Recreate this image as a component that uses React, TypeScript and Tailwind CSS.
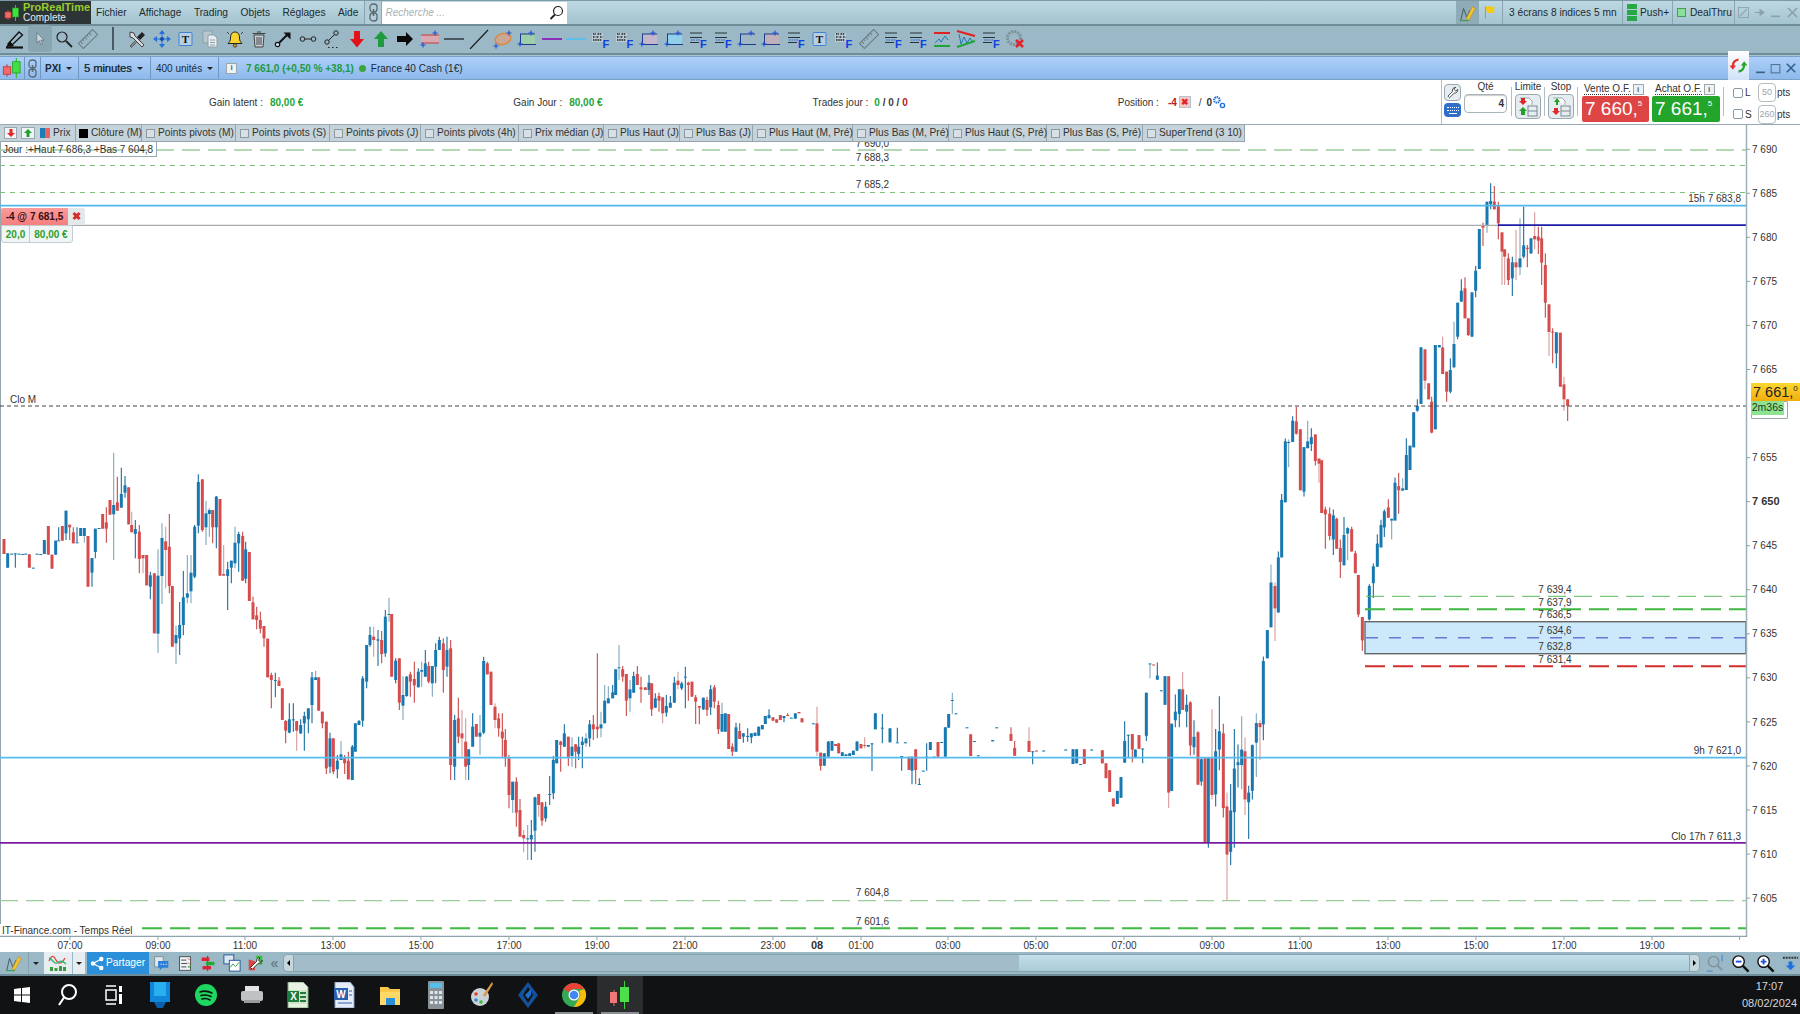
import React from "react";

type C = number[];
// candle tables: [x, red?, bodyTop, bodyBottom, wickTop?, wickBottom?, lightWick?] in crop units
const Z8: C[] = [[12,1,327,372],[23,0,370,413],[35,0,371,372],[46,0,370,372,370,413],[57,0,371,372],[68,0,372,373],[77,0,371,372],[88,1,373,413],[100,0,413,414],[111,0,371,372],[122,0,372,373],[133,0,330,372],[145,1,288,374],[156,1,374,416],[167,0,332,374],[176,0,331,332,292,332],[187,1,288,332],[198,0,242,310,242,330],[209,1,284,292,284,330],[220,1,307,340,292,340],[231,0,337,338,292,338],[242,0,294,318],[253,0,294,318,294,338,1],[264,1,318,470],[276,0,384,428,384,470],[286,0,296,366,296,385],[297,0,294,295],[308,1,252,296],[319,1,277,296,232,338],[330,1,210,254],[341,0,225,253,68,390,1],[352,1,217,242,140,242],[364,0,192,233,113,233],[375,0,166,188,138,203],[386,1,172,283],[395,1,285,307,245,307,1],[406,0,297,312,270,385],[418,1,305,387,285,430],[429,1,375,385,375,430,1],[440,1,375,466],[451,0,436,470,425,508],[463,1,430,610],[474,0,437,611,358,668,1],[486,0,324,438,280,522,1],[497,1,334,360,290,475,1],[508,1,350,468,252,490],[517,1,468,650],[528,0,615,640,587,703,1],[539,0,585,625,516,675],[550,0,502,585,423,616],[562,0,490,503,375,520,1],[573,0,428,484,375,520,1],[584,0,290,440,285,445],[595,0,156,287,133,310],[607,1,148,300,148,305],[618,0,250,292,212,345,1],[628,0,240,252,235,320,1],[638,1,240,292,240,340],[649,0,200,292,198,355],[660,1,207,437],[671,1,432,437,345,437,1],[683,0,418,438,395,540],[694,0,392,413,392,460],[705,0,338,400,290,415,1],[716,0,312,340,305,425],[728,1,318,452,305,452],[737,0,358,446,335,460],[748,1,366,513],[759,1,517,568,500,568],[770,1,556,570,530,598],[781,1,570,596,545,610],[792,1,588,625,588,650],[803,1,626,742],[814,1,735,750,728,835],[826,0,750,751,728,802],[837,1,752,768,742,768],[847,1,775,870,775,835],[857,1,873,902,870,940],[868,0,868,908,820,910],[880,0,868,870,820,905],[890,1,873,902,873,962,1],[902,0,885,910,868,912],[913,0,858,880,845,962],[925,0,835,868,835,910],[936,0,742,825,726,880],[947,0,742,750,722,750,1],[956,1,742,842],[967,1,845,880,845,895],[979,1,875,1015,875,1032],[990,0,925,1010,908,1030],[1000,1,925,1025,925,1032],[1012,0,992,1018,975,1045],[1023,0,973,990,933,990,1],[1034,1,985,1000,975,1032],[1045,1,992,1048,965,1048],[1057,0,950,1050,945,1050],[1066,0,880,965],[1077,0,873,885,870,885],[1088,0,745,872,738,890],[1100,0,645,755,645,775],[1110,0,615,645,590,650],[1121,1,620,630,590,680,1],[1134,0,628,632,600,708],[1145,1,630,672,603,700],[1156,0,560,670,540,680],[1167,0,552,554,503,575,1],[1175,1,552,740],[1187,0,692,750,685,760],[1198,1,685,818,685,840],[1209,0,795,827,738,870,1],[1220,0,740,798,738,800],[1231,1,733,755,725,800],[1243,1,747,766,695,818],[1255,0,725,772,715,772],[1265,0,720,725,695,770,1],[1276,0,700,740,660,740],[1286,1,708,755,695,760],[1297,0,708,760,708,800,1],[1307,0,660,710,640,760],[1318,0,630,660,620,660],[1330,1,640,720,625,788],[1341,0,660,710,620,740],[1352,1,655,1005,630,1050],[1364,0,870,1010,855,1050],[1375,1,865,920,803,940],[1386,1,910,925,840,980,1],[1397,1,935,1010,865,1050,1],[1406,0,958,1005,958,1050],[1418,0,890,950,850,950],[1429,1,882,920,882,920,1],[1440,0,908,920,855,975,1],[1451,0,693,908,680,912],[1462,1,700,733,695,733],[1473,1,725,825],[1485,1,830,870,820,895,1],[1496,1,865,895,850,920]];
const Z9: C[] = [[7,1,305,325,250,380],[16,1,330,385,297,410],[27,1,385,495,375,535],[38,0,455,510,455,548,1],[49,1,455,548,442,590],[60,1,540,620,507,620],[71,1,615,625,600,667,1],[83,0,625,626,585,690,1],[94,0,615,628,570,690],[105,0,502,602,500,665],[116,1,492,525,492,560,1],[126,1,517,572,517,587],[137,0,530,565,515,575],[149,0,492,493,438,525],[160,0,390,490,378,508],[170,0,330,400],[182,1,335,345,332,425],[193,0,310,350,283,350],[205,1,320,382,320,408],[216,0,350,378,322,410,1],[227,1,343,365,343,415],[236,0,350,372,320,390],[247,0,335,345,320,415],[258,0,325,340,310,350,1],[269,0,283,325,270,350],[280,1,283,298,255,330],[292,1,290,298,70,325],[303,0,283,295,245,322,1],[314,0,212,280,165,280,1],[325,0,205,220,168,220,1],[338,0,187,205,165,205],[347,0,118,195],[357,0,112,113,45,150,1],[368,1,118,140,108,155],[379,1,132,212,132,258],[390,0,178,205,150,245,1],[401,0,138,188,125,188],[412,1,132,165,108,165],[423,1,172,178,140,218],[436,1,172,180],[447,0,158,180,135,195],[455,1,160,238,160,258],[466,0,205,233,190,233],[477,1,198,212,188,245],[488,1,202,250,202,280,1],[499,0,228,248,195,260],[511,0,218,233,198,233],[523,0,158,218,140,218],[534,1,152,165,125,178,1],[545,0,160,175,155,180],[556,0,140,141,110,235],[565,1,158,165,155,212],[576,1,155,200],[587,1,202,215,195,282],[598,1,228,233,228,283],[610,0,203,238,203,240],[621,1,210,240,200,258],[632,0,178,232,165,255],[643,1,172,215,165,235],[655,1,225,298,212,312],[666,0,252,305,218,305,1],[676,0,250,305],[686,1,252,357],[697,1,350,365,340,378],[708,0,292,365,278,365],[719,1,303,327,280,327],[730,0,310,320,310,338],[743,0,318,320,295,335],[754,0,310,322,310,340],[765,0,308,318],[776,0,290,317],[787,0,285,298],[796,0,258,282],[807,0,255,265,238,265],[819,1,262,272],[830,1,268,278],[841,1,255,270],[852,0,258,264,258,277],[863,1,255,258,250,258],[874,0,263,264],[886,0,250,266],[897,1,246,250],[906,1,265,277],[940,0,280,281],[951,1,280,365,230,378,1],[962,1,368,408,368,422],[973,0,370,407],[985,0,335,380,333,380],[996,0,333,362],[1007,1,342,348],[1016,1,340,370],[1027,0,367,378],[1038,0,373,378],[1049,0,370,378],[1060,0,362,375],[1071,0,335,362,333,362],[1083,1,342,355],[1094,1,345,348,322,355,1],[1105,0,345,350],[1116,0,340,341,340,423],[1126,0,250,298],[1147,0,293,294,252,340],[1170,0,295,337],[1192,0,337,338,293,337],[1205,0,378,379,378,422],[1216,0,337,338],[1227,1,380,420],[1236,0,380,422,380,463],[1247,1,358,420,358,463],[1258,0,462,463,445,463],[1270,0,422,423],[1280,0,380,381,340,422],[1291,0,336,360],[1303,0,380,381],[1314,1,336,380],[1325,0,336,337],[1336,0,292,380],[1346,0,252,293],[1357,0,210,211,188,252,1],[1368,0,250,251],[1401,0,292,293],[1412,1,313,378],[1423,0,333,334],[1435,0,376,377],[1478,0,330,334],[1490,0,292,293]];
const Z10: C[] = [[33,1,970,990,950,990],[44,1,1010,1033,990,1033],[87,1,990,1022,950,1022,1],[98,0,1020,1021,1020,1058],[109,1,1018,1019],[131,0,1018,1019],[197,0,1015,1016],[219,0,1014,1057],[230,0,1014,1055],[242,0,1057,1058],[253,1,1014,1057],[275,0,1015,1016],[307,1,1017,1055],[318,1,1055,1098],[329,1,1075,1138],[340,1,1157,1180],[352,0,1135,1173],[363,0,1095,1155],[374,0,990,1053,933,1053],[385,0,972,973,972,1040],[397,1,970,1015,970,1052],[406,0,1015,1038,1015,1040],[417,1,973,1013],[428,0,1012,1013,1012,1055],[439,0,850,975,850,990],[450,0,765,766,765,808,1],[461,1,768,769],[472,0,800,812,762,812],[484,0,843,844],[495,0,802,885],[506,1,802,1140,802,1185,1],[515,0,940,1135],[526,0,905,930,855,950],[538,0,840,912,840,950],[548,1,840,900,790,900,1],[560,0,885,905,855,950],[571,1,878,1003,875,1032],[582,0,978,1008,930,1030],[594,1,965,1117,962,1117],[604,0,1043,1108,1040,1120],[615,1,1040,1285],[625,0,1040,1285,1040,1300],[636,1,1040,1147,898,1160,1],[647,0,1020,1145,955,1180],[658,0,962,1015,860,1075],[670,1,968,1185,940,1212],[681,1,1180,1320,1140,1455,1],[692,0,1192,1312,1115,1350],[703,0,1070,1197,955,1300],[714,0,1052,1060,1000,1125],[725,0,1015,1060,918,1130,1],[735,1,1020,1160,980,1205,1],[746,0,1140,1168,1120,1275],[757,0,1002,1135,1000,1160],[769,0,938,995,910,1095,1],[780,1,938,950,930,1045,1],[790,0,758,942,745,988],[802,0,668,750],[813,0,530,660,478,660,1],[825,1,540,605,530,700,1],[835,0,457,617,440,617],[845,0,290,457,273,457],[856,0,120,297,112,297],[866,0,122,125,115,195,1],[878,0,60,122,47,122],[889,1,62,98,20,100],[901,1,85,262],[912,0,137,266,137,280],[923,0,120,140,60,140,1],[934,0,108,128,82,148],[946,1,100,177,100,190],[957,1,170,185,170,240,1],[965,1,175,328],[976,1,318,332,310,432],[989,1,330,395,312,407],[1000,0,335,405,318,450],[1010,1,345,432,342,432],[1021,1,430,470,405,517],[1032,0,392,480,340,480],[1043,0,372,388,368,465,1],[1055,1,375,440,368,440],[1066,1,445,503,438,503],[1075,1,508,623,508,630],[1087,1,630,698,630,728],[1108,0,540,637,535,640],[1120,0,483,532,475,575],[1132,0,417,484,390,484],[1143,0,363,428,348,428],[1153,0,323,370,318,398],[1165,1,312,342,288,342],[1175,0,345,350,345,405,1],[1185,0,240,350,225,350],[1196,1,250,262,212,330]];
const Z6: C[] = [[308,0,1015,1022,985,1022,1],[319,0,915,1020,865,1020],[330,0,887,960],[341,0,787,892],[352,0,768,782,748,785],[363,0,592,762],[375,1,598,692,598,718,1],[386,1,700,748],[395,1,755,848,740,850],[406,0,585,838],[418,0,585,592],[428,1,592,672,560,672,1],[440,1,665,725,665,755],[451,0,660,725,625,730],[462,0,582,652,515,655,1],[473,0,458,560,458,568],[484,0,422,455,388,455],[495,1,415,505,382,505],[505,1,505,555,505,558],[516,0,427,560],[527,0,362,422,348,442],[538,0,237,357],[549,1,228,233,218,288],[561,0,155,225,155,248,1],[572,0,153,163,100,178],[583,1,155,178,108,178],[595,1,168,220,155,268],[606,1,247,305,247,405,1],[614,1,298,320,298,405,1],[625,1,325,390,310,405],[637,0,337,385,320,438],[648,1,337,352,240,390,1],[660,0,325,352,205,375,1],[671,0,286,320,170,325],[682,1,293,297,285,352],[693,0,265,310,265,312],[704,1,258,268,187,298,1],[715,1,260,272,230,312],[725,1,265,338,230,405],[736,1,345,458,310,503],[747,1,463,546,463,618,1],[758,1,545,546,535,640],[769,0,547,610,547,655],[781,1,548,710],[792,1,703,748,680,782,1],[803,1,748,768,748,813]];

// [rows, x origin, y origin, vertical scale of that table]
const SETS: [C[], number, number, number][] = [[Z8,0,430,3],[Z9,500,630,3],[Z10,1000,400,2.9037],[Z6,1300,150,3]];
const yP = (p: number) => 193.3 + (7685 - p) * 8.81;
const PRICES = [7690,7685,7680,7675,7670,7665,7655,7650,7645,7640,7635,7630,7625,7620,7615,7610,7605];
const TIMES: [string, number][] = [["07:00",70],["09:00",158],["11:00",245],["13:00",333],["15:00",421],["17:00",509],["19:00",597],["21:00",685],["23:00",773],["01:00",861],["03:00",948],["05:00",1036],["07:00",1124],["09:00",1212],["11:00",1300],["13:00",1388],["15:00",1476],["17:00",1564],["19:00",1652]];
const CENTER: [string, number][] = [["7 690,0",147],["7 688,3",161],["7 685,2",188],["7 604,8",896],["7 601,6",925]];
const BOXL: [string, number][] = [["7 639,4",592.5],["7 637,9",605.5],["7 636,5",618],["7 634,6",633.5],["7 632,8",649.5],["7 631,4",662.5]];

function Candles() {
  const out: React.ReactNode[] = [];
  SETS.forEach(([rows, ox, oy, k], s) =>
    rows.forEach((r, i) => {
      const [zx, red, bt, bb, wt = bt, wb = bb, light = 0] = r;
      const x = ox + zx / 3;
      const top = oy + bt / k, bot = oy + bb / k;
      const body = red ? "#d64c4c" : "#1878b0";
      const wick = light ? (red ? "#d99a9a" : "#7ea8bd") : red ? "#c84a4a" : "#1a6d9f";
      out.push(<line key={`w${s}-${i}`} x1={x} x2={x} y1={oy + wt / k} y2={oy + wb / k} stroke={wick} strokeWidth={1.1} />);
      out.push(<rect key={`b${s}-${i}`} x={x - 1.5} y={top} width={3} height={Math.max(bot - top, 1)} fill={body} />);
    })
  );
  return <g>{out}</g>;
}

function Chart() {
  const txt = { fontSize: 10, fill: "#333" };
  return (
    <svg width={1800} height={827} viewBox="0 125 1800 827" className="block">
      <line x1={0.5} x2={0.5} y1={125} y2={936} stroke="#94a6ae" />
      <line x1={0} x2={1746} y1={150} y2={150} stroke="#9dcc9d" strokeWidth={1.3} strokeDasharray="18 8" />
      <line x1={0} x2={1746} y1={165.5} y2={165.5} stroke="#7cc07c" strokeDasharray="5 5" />
      <line x1={0} x2={1746} y1={192.5} y2={192.5} stroke="#7cc07c" strokeDasharray="5 5" />
      <line x1={0} x2={1746} y1={900.7} y2={900.7} stroke="#9dcc9d" strokeWidth={1.3} strokeDasharray="18 8" />
      <line x1={142} x2={1746} y1={928.3} y2={928.3} stroke="#3fb83f" strokeWidth={2} strokeDasharray="20 8" />
      <rect x={1365} y={621.7} width={381} height={32} fill="#cce9fb" stroke="#666" strokeWidth={1.4} />
      <Candles />
      <line x1={0} x2={1746} y1={205.7} y2={205.7} stroke="#4fb9ee" strokeWidth={1.8} />
      <line x1={0} x2={1498} y1={225.4} y2={225.4} stroke="#a9a9a9" strokeWidth={1.3} />
      <line x1={1498} x2={1746} y1={225.2} y2={225.2} stroke="#1c1ca8" strokeWidth={1.8} />
      <line x1={0} x2={1746} y1={406} y2={406} stroke="#444" strokeDasharray="4 3" />
      <line x1={0} x2={1746} y1={757.7} y2={757.7} stroke="#55bdf0" strokeWidth={1.8} />
      <line x1={0} x2={1746} y1={842.8} y2={842.8} stroke="#7a1ea1" strokeWidth={1.8} />
      <line x1={1366} x2={1746} y1={596.3} y2={596.3} stroke="#5cb85c" strokeDasharray="18 8" />
      <line x1={1365} x2={1746} y1={609.3} y2={609.3} stroke="#3fb83f" strokeWidth={2} strokeDasharray="20 8" />
      <line x1={1366} x2={1746} y1={637.7} y2={637.7} stroke="#6a76d2" strokeWidth={1.6} strokeDasharray="12 11" />
      <line x1={1365} x2={1746} y1={666.3} y2={666.3} stroke="#d32f2f" strokeWidth={2} strokeDasharray="20 8" />
      {CENTER.map(([t, y]) => <text key={t} x={872.5} y={y} textAnchor="middle" {...txt}>{t}</text>)}
      {BOXL.map(([t, y]) => <text key={t} x={1555} y={y} textAnchor="middle" {...txt}>{t}</text>)}
      <text x={1741} y={201.5} textAnchor="end" {...txt}>15h 7 683,8</text>
      <text x={1741} y={753.5} textAnchor="end" {...txt}>9h 7 621,0</text>
      <text x={1741} y={839.5} textAnchor="end" {...txt}>Clo 17h 7 611,3</text>
      <text x={10} y={403} {...txt}>Clo M</text>
      <rect x={0} y={924} width={140} height={12} fill="#fff" />
      <text x={2} y={934} {...txt}>IT-Finance.com - Temps Réel</text>
      <line x1={1746.5} x2={1746.5} y1={125} y2={937} stroke="#9db0b8" strokeWidth={1.5} />
      <line x1={0} x2={1747} y1={936.3} y2={936.3} stroke="#90a4ae" strokeWidth={1.3} />
      {PRICES.map((p) => {
        const y = yP(p);
        return (
          <g key={p}>
            <line x1={1746} x2={1750} y1={y} y2={y} stroke="#90a4ae" />
            <text x={1752} y={y + 3.6} fontSize={p === 7650 ? 11 : 10} fontWeight={p === 7650 ? 700 : 400} fill="#333">{`7 ${String(p).slice(1)}`}</text>
          </g>
        );
      })}
      {TIMES.map(([t, x], i) => (
        <g key={i}>
          <line x1={x} x2={x} y1={936} y2={940} stroke="#90a4ae" />
          <text x={x} y={949} textAnchor="middle" {...txt}>{t}</text>
        </g>
      ))}
      <line x1={817} x2={817} y1={936} y2={940} stroke="#90a4ae" />
      <text x={817} y={949} textAnchor="middle" fontSize={11} fontWeight={700} fill="#333">08</text>
      <line x1={1739.6} x2={1739.6} y1={936} y2={940} stroke="#90a4ae" />
    </svg>
  );
}

const S = ({ children, w = 20 }: { children: React.ReactNode; w?: number }) => (
  <svg width={w} height={w} viewBox="0 0 20 20" className="block shrink-0">{children}</svg>
);
const Plus = ({ x, y, c = "#1f4fd8" }: { x: number; y: number; c?: string }) => (
  <path d={`M${x - 2.5} ${y}h5M${x} ${y - 2.5}v5`} stroke={c} strokeWidth={1.1} />
);
const LineIc = ({ c }: { c: string }) => <S><path d="M0 10h20" stroke={c} strokeWidth={1.8} /></S>;
const RectIc = ({ f }: { f: string }) => (
  <S>
    <rect x={3} y={5} width={15} height={10} fill={f} />
    <path d="M2 15.5h17M3.5 5v11M3 5h15" stroke="#1c3d8a" strokeWidth={1} />
    <Plus x={14} y={4} /><Plus x={3} y={15} />
  </S>
);
const FibF = () => (
  <S>
    <path d="M2 4h12M2 8.500h12M2 13.500h9" stroke="#26343a" strokeWidth={1.100} />
    <path d="M3 11h9" stroke="#2a5fd8" strokeWidth={1.100} strokeDasharray="1.500 1" />
    <text x={12} y={18.500} fontSize={11} fontWeight={700} fill="#1040e0">F</text>
  </S>
);
const TxtF = () => (
  <S>
    <path d="M1 4h11v9H1z" fill="#b9cbd4" />
    <path d="M2 5h3M6.500 5h4M2 8h2.500M5.500 8h2.500M9 8h2.500M2 11h9" stroke="#222" strokeWidth={1.300} strokeDasharray="1.500 .7" />
    <text x={11.500} y={18.500} fontSize={11} fontWeight={700} fill="#1040e0">F</text>
  </S>
);
const Ruler = () => (
  <S><g transform="rotate(-45 10 10)"><rect x={0} y={6.5} width={20} height={7} fill="none" stroke="#6a7a82" /><path d="M3 6.5v3M6 6.5v2M9 6.5v3M12 6.5v2M15 6.5v3" stroke="#6a7a82" /></g></S>
);
const TBox = () => (
  <S><rect x={3} y={3.5} width={13} height={13} rx={1} fill="#b7cfe0" stroke="#3e82d8" /><text x={9.5} y={14} textAnchor="middle" fontSize={11} fontWeight={700} fontFamily="Liberation Serif" fill="#111">T</text></S>
);

const TOOLS: React.ReactNode[] = [
  <S key="a"><path d="M3 15 14 3l3.5 3L6 17z" fill="none" stroke="#111" strokeWidth={1.3} /><path d="M1 18.5h17" stroke="#111" strokeWidth={2.2} /><path d="M1 18 5 12l4 5z" fill="#111" /></S>,
  <div key="b" className="flex h-[27px] w-[24px] items-center justify-center rounded-sm bg-[#8aa5b2]"><S w={16}><path d="M6 2v13l3-3 2.2 5 2-1-2.2-4.6H15z" fill="#c9d6dc" stroke="#55666f" strokeWidth={.8} /></S></div>,
  <S key="c"><circle cx={8} cy={8} r={5} fill="none" stroke="#222" strokeWidth={1.2} /><path d="M12 12l6 6" stroke="#222" strokeWidth={1.8} /></S>,
  <Ruler key="d" />,
  <div key="e" className="h-[23px] w-[1.5px] bg-[#4a5a62]" />,
  <S key="f"><path d="M3 3l4 1 1 3 9 9-2 2-9-9-3-1z" fill="#d8dde0" stroke="#333" strokeWidth={.9} /><path d="M10 8l5-5 3 3-5 5z" fill="#222" /><path d="M8 12l-5 5 1.5 1.5 5-5" fill="#888" stroke="#333" strokeWidth={.6} /></S>,
  <S key="g"><path d="M10 1 13 5H7zM10 19l-3-4h6zM1 10l4-3v6zM19 10l-4 3V7z" fill="#1f6fe0" /><path d="M5 10h10M10 5v10" stroke="#1f6fe0" /><circle cx={10} cy={10} r={2} fill="#1a4aa8" /></S>,
  <TBox key="h" />,
  <S key="i"><rect x={3} y={2} width={9} height={12} fill="#b8c6cd" stroke="#8fa0a8" /><path d="M8 6h6l3 3v9H8z" fill="#e8eef0" stroke="#8fa0a8" /><path d="M10 11h5M10 13.5h5M10 16h5" stroke="#8fa0a8" /></S>,
  <S key="j"><path d="M10 3c3.5 0 4.5 3 4.5 6s1.2 4 2.5 5.5H3C4.3 13 5.5 12 5.5 9S6.500 3 10 3z" fill="#f6d32d" stroke="#222" strokeWidth={1} /><circle cx={10} cy={16.500} r={1.7} fill="#d0a010" stroke="#222" strokeWidth={.7} /><path d="M2 3l2 2M18 3l-2 2" stroke="#444" strokeWidth={1} /></S>,
  <S key="k"><path d="M5 6h10l-1 12H6z" fill="#c9d0d3" stroke="#444" /><path d="M3.500 4.500h13M8 3h4M8 8v8M10 8v8M12 8v8" stroke="#444" /></S>,
  <S key="l"><path d="M5 15 15 5" stroke="#111" strokeWidth={2} /><path d="M10.500 3.500h7v7z" fill="#111" /><circle cx={4.500} cy={15.500} r={2.200} fill="#d6e2e8" stroke="#111" strokeWidth={1.200} /></S>,
  <S key="m"><circle cx={4.500} cy={10} r={2.300} fill="none" stroke="#222" /><circle cx={15.500} cy={10} r={2.300} fill="none" stroke="#222" /><path d="M7 10h6" stroke="#222" /></S>,
  <S key="n"><circle cx={14} cy={4} r={2.200} fill="none" stroke="#222" /><circle cx={5} cy={13} r={2.200} fill="none" stroke="#222" /><path d="M6.500 11.500l6-6" stroke="#222" /><path d="M6 18.500h1.500M10 18.500h1.500M14 18.500h1.500" stroke="#222" /></S>,
  <S key="o"><path d="M7 2h6v8h4l-7 8.500L3 10h4z" fill="#e3121a" /></S>,
  <S key="p"><path d="M10 2l7 8h-4v8H7v-8H3z" fill="#1f9a3d" /></S>,
  <S key="q"><path d="M2 7h9V3l7 7-7 7v-4H2z" fill="#0a0a0a" /></S>,
  <S key="r"><rect x={1} y={6} width={18} height={8} fill="#d9a8b0" /><path d="M1 6h18M1 14h18" stroke="#c43a3a" /><Plus x={15} y={4} /><Plus x={3} y={16} /></S>,
  <LineIc key="s" c="#3f4f57" />,
  <S key="t"><path d="M1 20 19 1" stroke="#1a1a1a" strokeWidth={1.2} /></S>,
  <S key="u"><ellipse cx={10} cy={10} rx={8} ry={5.500} fill="#c9a792" stroke="#d98a4a" strokeWidth={1.500} transform="rotate(-15 10 10)" /><Plus x={16} y={4} /><Plus x={3} y={17} /></S>,
  <RectIc key="v" f="#9fcfa8" />,
  <LineIc key="w" c="#8a22b8" />,
  <LineIc key="x" c="#58c0ee" />,
  <TxtF key="y" />, <TxtF key="z" />,
  <RectIc key="A" f="#c4b7cc" />, <RectIc key="B" f="#8fd0ec" />,
  <FibF key="C" />, <FibF key="D" />,
  <RectIc key="E" f="#9fb8c4" />, <RectIc key="F" f="#c0b0ba" />,
  <FibF key="G" />, <TBox key="H" />, <TxtF key="I" />, <Ruler key="J" />,
  <FibF key="K" />, <FibF key="L" />,
  <S key="M"><path d="M2 4h16" stroke="#d22" strokeWidth={2} /><path d="M2 17h16" stroke="#1fa33a" strokeWidth={2} /><path d="M3 14l4-4 2 3 4-6 3 4" fill="none" stroke="#1c7cb4" /></S>,
  <S key="N"><path d="M1 2l18 5" stroke="#d22" strokeWidth={2} /><path d="M1 18l18-6" stroke="#1fa33a" strokeWidth={2} /><path d="M3 5l2 10 3-7 3 6 3-5 2 3" fill="none" stroke="#1c7cb4" /></S>,
  <FibF key="O" />,
  <S key="P"><circle cx={9} cy={9} r={6.500} fill="none" stroke="#7f9099" strokeWidth={3} strokeDasharray="2 1" /><path d="M11 11l7 7M18 11l-7 7" stroke="#e2222a" strokeWidth={2.500} /></S>,
];

const Caret = ({ c = "#222" }: { c?: string }) => <span className="h-0 w-0 border-x-[3px] border-t-[3px] border-x-transparent" style={{ borderTopColor: c }} />;
const Chain = () => (
  <svg width={9} height={19} viewBox="0 0 9 19"><rect x={1} y={1} width={7} height={8} rx={3} fill="none" stroke="#596a73" strokeWidth={1.300} /><rect x={1} y={10} width={7} height={8} rx={3} fill="none" stroke="#596a73" strokeWidth={1.300} /><path d="M4.500 6v7" stroke="#596a73" strokeWidth={1.500} /></svg>
);
const CandleLogo = ({ w = 16 }: { w?: number }) => (
  <svg width={w} height={w} viewBox="0 0 16 16"><path d="M11.500 0v16" stroke="#2fc52f" /><rect x={8.500} y={3} width={6} height={9} fill="#3fe03f" stroke="#1f9a1f" strokeWidth={.6} /><path d="M4 5v10" stroke="#e04545" /><rect x={1} y={7} width={6} height={6} fill="#f06a6a" stroke="#c03030" strokeWidth={.6} /></svg>
);
const Info = () => <span className="flex h-[11px] w-[11px] items-center justify-center border border-[#9aa7ad] bg-[#eef2f4] text-[8px] font-bold leading-none text-[#55656d]">i</span>;
const Box = ({ on }: { on?: boolean }) => <span className={`block h-[9px] w-[9px] shrink-0 border ${on ? "border-black bg-black" : "border-[#8b9aa2] bg-[#d8e0e5]"}`} />;

const TABS: [string, number][] = [
  ["Points pivots (M)", 94], ["Points pivots (S)", 94], ["Points pivots (J)", 91], ["Points pivots (4h)", 98], ["Prix médian (J)", 85],
  ["Plus Haut (J)", 76], ["Plus Bas (J)", 73], ["Plus Haut (M, Pré)", 100], ["Plus Bas (M, Pré)", 96], ["Plus Haut (S, Pré)", 98], ["Plus Bas (S, Pré)", 96], ["SuperTrend (3 10)", 102],
];

function TopBar() {
  return (
    <div className="flex h-[24px] items-center border-t border-[#7e9aa6] bg-gradient-to-b from-[#bdd8e2] to-[#a3c4d0] text-[10.200px] text-[#1c2a30]">
      <div className="flex h-full w-[91px] items-center gap-[3px] bg-[#2c3436] pl-[4px]">
        <CandleLogo />
        <div className="leading-[10.500px]">
          <div className="text-[11px] font-bold text-[#98cc2e]">ProRealTime</div>
          <div className="text-[10px] text-[#e8ecec]">Complete</div>
        </div>
      </div>
      <div className="ml-[5px] flex gap-[12.500px]">
        <span>Fichier</span><span>Affichage</span><span>Trading</span><span>Objets</span><span>Réglages</span><span>Aide</span>
      </div>
      <div className="ml-[6px] flex h-[23px] w-[18px] items-center justify-center border-x border-[#8aa5b1] bg-[#b2cdd8]"><Chain /></div>
      <div className="flex h-[22px] w-[185px] items-center justify-between bg-white pl-[3px] pr-[3px] text-[10px] italic text-[#a9b2b6]">
        <span>Recherche ...</span>
        <svg width={15} height={15} viewBox="0 0 15 15"><circle cx={9} cy={6} r={4.500} fill="none" stroke="#222" strokeWidth={1.200} /><path d="M6 9.500 1.500 14" stroke="#222" strokeWidth={1.800} /></svg>
      </div>
      <div className="ml-auto flex h-full items-center text-[10.200px]">
        <div className="flex h-full w-[23px] items-center justify-center bg-[#8fabb7]"><S w={18}><path d="M2 18 5 5l4 10 3-8" fill="none" stroke="#3a5560" /><path d="M8 16 15 3l3 2-7 13z" fill="#f4c430" stroke="#b08a10" strokeWidth={.6} /><path d="M1 18.500h10" stroke="#2a9a3a" /></S></div>
        <div className="flex h-full w-[24px] items-center justify-center border-r border-[#8aa5b1]"><S w={16}><path d="M3 2h11v8H5z" fill="#f7c914" /><path d="M3 2v15" stroke="#b38e10" /></S></div>
        <span className="w-[120px] border-r border-[#8aa5b1] pl-[6px] leading-[24px]">3 écrans 8 indices 5 mn</span>
        <div className="flex h-full w-[50px] items-center gap-[3px] border-r border-[#8aa5b1] pl-[4px]">
          <span className="flex h-[18px] w-[10px] flex-col gap-px"><i className="flex-1 bg-[#28a745]" /><i className="flex-1 bg-[#28a745]" /><i className="flex-1 bg-[#28a745]" /></span>
          <span>Push+</span>
        </div>
        <div className="flex h-full w-[62px] items-center gap-[4px] border-r border-[#8aa5b1] pl-[4px]">
          <span className="h-[9px] w-[9px] border border-[#4d9a5a] bg-[#88e09a]" />
          <span>DealThru</span>
        </div>
        <div className="flex w-[65px] items-center gap-[5px] pl-[3px] text-[#8aa0aa]">
          <S w={11}><rect x={1} y={1} width={18} height={18} fill="none" stroke="#8aa0aa" strokeWidth={1.500} /><path d="M4 16 16 4" stroke="#8aa0aa" strokeWidth={2} /></S>
          <S w={11}><path d="M1 10h10M11 5v10l7-5z" fill="#8aa0aa" stroke="#8aa0aa" strokeWidth={2} /></S>
          <S w={11}><path d="M2 17h16" stroke="#8aa0aa" strokeWidth={3} /></S>
          <S w={13}><path d="M3 3l14 14M17 3 3 17" stroke="#8aa0aa" strokeWidth={2.500} /></S>
        </div>
      </div>
    </div>
  );
}

function Toolbar() {
  return (
    <>
      <div className="flex h-[29px] items-center border-t-2 border-[#6f8d99] bg-[#9ab8c5] pb-[2px] pl-[3px]">
        {TOOLS.map((t, i) => <div key={i} className="flex h-full w-[24.400px] items-center justify-center">{t}</div>)}
      </div>
      <div className="h-[3px] border-t-2 border-[#6f8d99] bg-[#a8c4d0]" />
    </>
  );
}

function TitleBar() {
  const sep = "h-full w-px bg-[#6f96bf]";
  return (
    <div className="flex h-[24px] items-center border-y border-y-[#7aa0c6] bg-gradient-to-b from-[#accff9] to-[#8eb9ec] text-[10px] text-[#1c2a30]">
      <div className="flex h-full w-[24px] items-center justify-center"><CandleLogo w={20} /></div>
      <div className={sep} />
      <div className="flex w-[15px] justify-center"><Chain /></div>
      <div className={sep} />
      <div className="flex h-full w-[37px] items-center gap-[5px] pl-[4px] font-bold"><span className="text-[#1c2a30]">PXI</span><Caret /></div>
      <div className={sep} />
      <div className="flex h-full w-[71px] items-center gap-[5px] pl-[5px] text-[11px] font-bold text-[#24323a]"><span className="font-normal [text-shadow:0.300px_0_0_#24323a]">5 minutes</span><Caret /></div>
      <div className={sep} />
      <div className="flex h-full w-[67px] items-center gap-[5px] pl-[5px]"><span>400 unités</span><Caret /></div>
      <div className={sep} />
      <div className="ml-[7px]"><Info /></div>
      <span className="ml-[9px] font-bold text-[#1f9a3f]">7 661,0 (+0,50 % +38,1)</span>
      <span className="ml-[5px] h-[7px] w-[7px] rounded-full bg-[#3aa63a]" />
      <span className="ml-[5px]">France 40 Cash (1€)</span>
      <div className="ml-auto flex h-full items-center">
        <div className="-mt-[5px] flex h-[29px] w-[21px] items-center justify-center bg-gradient-to-b from-white to-[#cfe2f8]">
          <S w={19}><path d="M10 2.500A7.500 7.500 0 0 0 3 10H0.500l3.500 4.500L7.500 10H5.500A5 5 0 0 1 10 5z" fill="#e5322d" /><path d="M10 17.500A7.500 7.500 0 0 0 17 10h2.500L16 5.500 12.500 10h2A5 5 0 0 1 10 15z" fill="#2aa52a" /></S>
        </div>
        <div className="flex w-[51px] items-center gap-[4px] pl-[6px]">
          <S w={11}><path d="M2 17h16" stroke="#3a5f7a" strokeWidth={3} /></S>
          <S w={11}><rect x={2} y={3} width={16} height={15} fill="none" stroke="#3a5f7a" strokeWidth={1.500} /></S>
          <S w={12}><path d="M3 3l14 14M17 3 3 17" stroke="#2a5f8a" strokeWidth={2.500} /></S>
        </div>
      </div>
    </div>
  );
}

const Lbl = ({ children, w }: { children: React.ReactNode; w: string }) => <div className={`${w} flex h-[14px] items-end justify-center`}>{children}</div>;
const Vsep = ({ ml }: { ml: string }) => <div className={`${ml} mt-[7px] h-[29px] w-px bg-[#b4bdc2]`} />;

const OrderIc = ({ flip }: { flip?: boolean }) => (
  <div className="flex h-[25px] w-[26px] items-center justify-center rounded-sm border border-[#9aa9b0] bg-[#e6edf0]">
    <svg width={20} height={20} viewBox="0 0 20 20">
      <path d="M2 1h9l3 3v4" fill="#fff" stroke="#9aa9b0" />
      <path d={flip ? "M6 1l3 4H7v3H5V5H3z" : "M3 1h4v3h2L5 8 1 4h2z"} fill={flip ? "#22a02a" : "#e0272a"} />
      <path d={flip ? "M3 11h4v3h2l-4 4-4-4h2z" : "M5 10l4 4H7v4H3v-4H1z"} fill={flip ? "#e0272a" : "#22a02a"} />
      <rect x={10} y={9} width={9} height={10} fill="#e6edf0" stroke="#7a8a92" />
      <path d="M10 14h9" stroke="#7a8a92" />
    </svg>
  </div>
);

function InfoRow() {
  return (
    <div className="flex h-[45px] border-b border-[#98aab3] bg-white text-[10px] text-[#333]">
      <div className="flex w-[1441px] items-start gap-[210px] pl-[209px] pt-[14.500px]">
        <span className="flex gap-[7px]"><span>Gain latent :</span><b className="text-[#22a63a]">80,00 €</b></span>
        <span className="flex gap-[7px]"><span>Gain Jour :</span><b className="text-[#22a63a]">80,00 €</b></span>
        <span className="flex gap-[6px]"><span>Trades jour :</span><b><span className="text-[#22a63a]">0</span> / <span className="text-[#444]">0</span> / <span className="text-[#b52020]">0</span></b></span>
        <span className="flex items-center">
          <span>Position :</span>
          <b className="ml-[9px] text-[#b52020]">-4</b>
          <span className="ml-[2px] flex h-[12px] w-[12px] items-center justify-center border border-[#b8c2c8] bg-[#f3c9c9] text-[9px] font-bold leading-none text-[#e02525]">✖</span>
          <span className="ml-[8px]">/</span>
          <b className="ml-[5px]">0</b>
          <S w={14}><circle cx={7} cy={7} r={4} fill="none" stroke="#1f6fd8" strokeWidth={3} strokeDasharray="2 1" /><circle cx={15} cy={15} r={3} fill="none" stroke="#1f6fd8" strokeWidth={2} /></S>
        </span>
      </div>
      <div className="flex flex-1 items-start border-l border-[#b4bdc2]">
        <div className="ml-[2px] mt-[4px] flex w-[17px] flex-col gap-[2px]">
          <div className="flex h-[17px] items-center justify-center rounded-sm border border-[#9aa9b0] bg-[#e6edf0]"><S w={13}><path d="M15 2a5 5 0 0 0-5 6.500L3 15.500 5.500 18l7-7A5 5 0 0 0 18 5l-3 3-3-3z" fill="#fff" stroke="#333" strokeWidth={1.300} /></S></div>
          <div className="flex h-[14px] flex-col items-center justify-center gap-[1px] rounded-sm bg-[#2f6fc9]"><span className="h-[2px] w-[12px] border-t border-dotted border-white" /><span className="h-[2px] w-[12px] border-t border-dotted border-white" /><span className="h-px w-[8px] bg-white" /></div>
        </div>
        <div className="ml-[3px] w-[43px]">
          <Lbl w="w-full">Qté</Lbl>
          <div className="flex h-[19px] items-center justify-end rounded-sm border border-[#a8b4ba] bg-white pr-[2px] font-bold shadow-[inset_0_1px_1px_#ccc]">4</div>
        </div>
        <Vsep ml="ml-[4px]" />
        <div className="ml-[3px] w-[26px]"><Lbl w="w-full">Limite</Lbl><OrderIc /></div>
        <Vsep ml="ml-[3px]" />
        <div className="ml-[3px] w-[26px]"><Lbl w="w-full">Stop</Lbl><OrderIc flip /></div>
        <Vsep ml="ml-[3px]" />
        <div className="ml-[4px] w-[67px]">
          <div className="flex h-[16px] items-end gap-[2px] pb-[1px] pl-[2px]"><span className="border-b border-dotted border-[#333] leading-[11px]">Vente O.F.</span><Info /></div>
          <div className="flex h-[26px] items-start rounded-[2px] bg-[#de4545] pl-[3px] font-light text-[#fff]"><span className="text-[19px] leading-[26px]">7 660,</span><span className="mt-[3px] text-[8px] leading-[9px]">5</span></div>
        </div>
        <div className="ml-[3px] w-[68px]">
          <div className="flex h-[16px] items-end gap-[2px] pb-[1px] pl-[3px]"><span className="border-b border-dotted border-[#333] leading-[11px]">Achat O.F.</span><Info /></div>
          <div className="flex h-[26px] items-start rounded-[2px] bg-[#22a52a] pl-[3px] font-light text-[#fff]"><span className="text-[19px] leading-[26px]">7 661,</span><span className="mt-[3px] text-[8px] leading-[9px]">5</span></div>
        </div>
        <Vsep ml="ml-[3px]" />
        <div className="ml-[9px] flex flex-col gap-[2px] pt-[3px]">
          {[["L", "50"], ["S", "260"]].map(([l, v]) => (
            <div key={l} className="flex h-[19.500px] items-center">
              <span className="h-[10px] w-[10px] rounded-[2px] border border-[#8b9aa2] bg-white" />
              <span className="ml-[2px] w-[11px]">{l}</span>
              <span className="ml-[2px] flex h-[19px] w-[18px] items-center justify-center rounded-sm border border-[#b4bdc2] text-[9px] text-[#9aa5aa]">{v}</span>
              <span className="ml-[1px]">pts</span>
            </div>
          ))}
        </div>
      </div>
    </div>
  );
}

function Legend() {
  const item = "flex h-full items-center border-r border-[#93a5ae]";
  return (
    <div className="absolute left-0 top-0 flex h-[17px] w-[1245px] items-center border-b border-[#93a5ae] bg-[#c7d3da] text-[10.200px] text-[#333]">
      <div className="ml-[4px] flex h-[12px] w-[13px] items-center justify-center border border-[#98a8b0] bg-[#eef3f5]"><S w={10}><path d="M7 2h6v8h5l-8 8-8-8h5z" fill="#e3252a" /></S></div>
      <div className="ml-[4px] flex h-[12px] w-[14px] items-center justify-center border border-[#98a8b0] bg-[#eef3f5]"><S w={10}><path d="M10 2l8 8h-5v8H7v-8H2z" fill="#22a02a" /></S></div>
      <div className={`${item} ml-[5px] w-[36px] gap-[3px]`}>
        <span className="flex h-[10px] w-[10px]"><i className="w-1/2 bg-[#1c7cb4]" /><i className="w-1/2 bg-[#e8605f]" /></span><span>Prix</span>
      </div>
      <div className={`${item} w-[66px] gap-[3px] pl-[3px]`}><Box on /><span className="whitespace-nowrap">Clôture (M)</span></div>
      {TABS.map(([t, w]) => (
        <div key={t} className={`${item} gap-[3px] pl-[4px]`} style={{ width: w }}><Box /><span className="whitespace-nowrap">{t}</span></div>
      ))}
    </div>
  );
}

function ChartArea() {
  return (
    <div className="relative h-[827px] bg-white text-[10px] text-[#333]">
      <Chart />
      <Legend />
      <div className="absolute left-0 top-[17px] flex h-[15px] w-[157px] items-center border-b border-r border-[#9aa9b0] pl-[3px] whitespace-nowrap">Jour :+Haut 7 686,3 +Bas 7 604,8</div>
      <div className="absolute left-[1px] top-[83px] flex h-[17px]">
        <div className="flex w-[67px] items-center justify-center rounded-tl-[2px] bg-gradient-to-b from-[#fb9b9b] to-[#f47f7f] font-bold text-[#3a1010]">-4 @ 7 681,5</div>
        <div className="flex w-[17px] items-center justify-center rounded-tr-[2px] bg-[#e3e8eb] text-[11px] font-bold leading-none text-[#d32a2a]">✖</div>
      </div>
      <div className="absolute left-[1px] top-[100px] flex h-[18px] rounded-b-[3px] border border-[#c2ccd1] bg-[#f2f5f6] font-bold text-[#2ba02b]">
        <div className="flex w-[28px] items-center justify-center border-r border-[#c2ccd1]">20,0</div>
        <div className="flex w-[42px] items-center justify-center">80,00 €</div>
      </div>
      <div className="absolute left-[1751px] top-[276px] h-[18px] w-[37px] rounded-[1px] border border-[#9aa9b0] bg-white" />
      <div className="absolute left-[1751px] top-[258px] flex h-[18px] w-[49px] items-start bg-gradient-to-b from-[#fcd730] to-[#f2ad08] pl-[2px] text-[#222]"><span className="text-[14.500px] leading-[18px]">7 661,</span><span className="mt-[1px] text-[8px] leading-[9px]">0</span></div>
      <div className="absolute left-[1751px] top-[276px] flex h-[14px] w-[33px] items-center justify-center bg-[#8fe28f] text-[10.500px] text-[#1c3a1c]">2m36s</div>
    </div>
  );
}

function BottomBar() {
  return (
    <div className="flex h-[24px] items-center border-b-2 border-[#6f8d99] bg-[#9ab8c5]">
      <div className="flex h-full w-[29px] items-center justify-center border-r border-[#86a3b0]"><S w={18}><path d="M2 18 5 5l4 10 3-8" fill="none" stroke="#3a5560" /><path d="M8 16 15 3l3 2-7 13z" fill="#f4c430" stroke="#b08a10" strokeWidth={.6} /><path d="M1 18.500h10" stroke="#2a9a3a" /></S></div>
      <div className="flex h-full w-[15px] items-center justify-center"><Caret /></div>
      <div className="flex h-full w-[28px] items-center justify-center bg-[#e6eef2]"><S w={20}><path d="M1 8c3-7 5-5 7-1s5 5 9-2" fill="none" stroke="#e2423a" strokeWidth={1.300} /><path d="M1 5c3 0 5 7 8 5s5-3 9 1" fill="none" stroke="#2bb673" strokeWidth={1.300} /><path d="M2 18v-4h3v4zM6.500 18v-3h3v3zM11 18v-5h3v5zM15 18v-4h3v4z" fill="#3c9a3c" /></S></div>
      <div className="ml-px flex h-full w-[12px] items-center justify-center bg-[#e6eef2]"><Caret /></div>
      <div className="ml-[2px] flex h-full w-[62px] items-center gap-[1px] bg-[#2b90d9] pl-[3px] text-[10.200px] text-white">
        <S w={15}><circle cx={15} cy={4} r={3} fill="#fff" /><circle cx={4} cy={10} r={3} fill="#fff" /><circle cx={15} cy={16} r={3} fill="#fff" /><path d="M15 4 4 10l11 6" fill="none" stroke="#fff" strokeWidth={1.500} /></S>
        <span>Partager</span>
      </div>
      <div className="ml-[2px] flex w-[22px] justify-center"><S w={17}><rect x={2} y={2} width={10} height={12} fill="#dfe8ec" stroke="#6f8d99" /><path d="M6 7h12v8h-7l-3 3v-3H6z" fill="#2f7fd8" /><path d="M9 11h1M12 11h1M15 11h1" stroke="#fff" strokeWidth={1.500} /></S></div>
      <div className="ml-[1px] flex w-[23px] justify-center"><S w={17}><rect x={3} y={2} width={13} height={16} fill="#eef2f4" stroke="#444" /><path d="M5 6h6M5 10h7M5 14h6" stroke="#333" /><path d="M13 4l2 2M13 9l2 2" stroke="#d33" /><path d="M13 13l1 2 2-3" stroke="#2a2" fill="none" /></S></div>
      <div className="flex w-[23px] justify-center"><S w={17}><path d="M9 1v18" stroke="#333" /><path d="M2 3h9v4H2z" fill="#d23" /><path d="M7 8h10v4H7z" fill="#2a3" /><path d="M3 13h10v4H3z" fill="#d23" /></S></div>
      <div className="flex w-[24px] justify-center"><S w={18}><rect x={1} y={1} width={11} height={10} fill="#dce8f0" stroke="#1f4f9a" /><rect x={7} y={7} width={12} height={12} fill="#fff" stroke="#1f4f9a" /><path d="M8 15l3-4 3 3 4-5" fill="none" stroke="#2a9a4a" /></S></div>
      <div className="flex w-[22px] justify-center"><S w={18}><path d="M3 6v12h7V8z" fill="#e04545" /><path d="M11 2h7v10h-4" fill="#2fc52f" /><path d="M15 4a3 3 0 0 0-3 4L5 15l2 2 7-7a3 3 0 0 0 4-3l-2 2-2-2z" fill="#fff" stroke="#222" /></S></div>
      <span className="w-[17px] text-center text-[14px] leading-none text-[#4f6a76]">«</span>
      <div className="flex h-[18px] w-[11px] items-center justify-center rounded-l-sm border border-[#86a3b0] bg-[#c6d6dd]"><span className="h-0 w-0 border-y-[3px] border-r-[3px] border-y-transparent border-r-black" /></div>
      <div className="flex h-[18px] w-[1396px] border-y border-[#86a3b0]">
        <div className="w-[725px] bg-[#a2bdc9]" />
        <div className="flex-1 bg-gradient-to-b from-[#c4dfe9] to-[#a8cbd8]" />
      </div>
      <div className="flex h-[18px] w-[11px] items-center justify-center rounded-r-sm border border-[#86a3b0] bg-[#c6d6dd]"><span className="h-0 w-0 border-y-[3px] border-l-[3px] border-y-transparent border-l-black" /></div>
      <div className="ml-[6px] flex items-center gap-[6px]">
        <S w={19}><circle cx={8} cy={8} r={5.500} fill="none" stroke="#7f949e" strokeWidth={1.500} /><path d="M12 12l5 5" stroke="#7f949e" strokeWidth={2} /><path d="M17 1v7" stroke="#3a7fd8" /><path d="M1 18h6" stroke="#3a7fd8" /></S>
        <S w={19}><circle cx={8} cy={8} r={6} fill="#fff" stroke="#111" strokeWidth={1.500} /><path d="M5 8h6" stroke="#1f4fd8" strokeWidth={2} /><path d="M12.500 12.500l6 6" stroke="#111" strokeWidth={2.500} /></S>
        <S w={19}><circle cx={8} cy={8} r={6} fill="#fff" stroke="#111" strokeWidth={1.500} /><path d="M5 8h6M8 5v6" stroke="#1f4fd8" strokeWidth={2} /><path d="M12.500 12.500l6 6" stroke="#111" strokeWidth={2.500} /></S>
        <S w={19}><path d="M2 4h16" stroke="#333" strokeWidth={2} strokeDasharray="2 1" /><path d="M8 8h4v4h3l-5 5-5-5h3z" fill="#1f6fe0" /></S>
      </div>
    </div>
  );
}

const TB = ({ children, active, line }: { children: React.ReactNode; active?: boolean; line?: boolean }) => (
  <div className={`relative flex h-full w-[46px] items-center justify-center ${active ? "bg-[#2a2c2e]" : ""}`}>
    {children}
    {line && <span className="absolute bottom-0 left-[4px] h-[2px] w-[38px] bg-[#8a8f92]" />}
  </div>
);

function Taskbar() {
  return (
    <div className="flex h-[38px] bg-[#101214] pl-0">
      <div className="-ml-px flex h-full">
        <TB><svg width={16} height={16} viewBox="0 0 16 16"><path d="M0 2l7-1v6.500H0zM8 1l8-1v7.500H8zM0 8.500h7V15l-7-1zM8 8.500h8V16l-8-1z" fill="#fff" /></svg></TB>
        <TB><svg width={22} height={24} viewBox="0 0 22 24"><circle cx={12} cy={9} r={7} fill="none" stroke="#fff" strokeWidth={2} /><path d="M7 14.500 2 22" stroke="#fff" strokeWidth={2.200} /></svg></TB>
        <TB><svg width={18} height={20} viewBox="0 0 18 20"><path d="M1 1h10M1 19h10" stroke="#fff" strokeWidth={1.500} /><rect x={1} y={5} width={10} height={10} fill="none" stroke="#fff" strokeWidth={1.500} /><rect x={14} y={1} width={3} height={6} fill="#fff" /><rect x={14} y={9} width={3} height={10} fill="#fff" /></svg></TB>
        <TB><svg width={22} height={26} viewBox="0 0 22 26"><path d="M1 0h20v20H1z" fill="#0f86d8" /><path d="M5 0h12v14H5z" fill="#28b0ee" /><path d="M5 20h12l-3 6H8z" fill="#0a5fa8" /></svg></TB>
        <TB><svg width={24} height={24} viewBox="0 0 24 24"><circle cx={12} cy={12} r={11} fill="#1ed760" /><path d="M6 9c4-1.500 8-1 12 1M7 12.500c3.500-1 7-.6 10 1M8 16c2.500-.8 5.500-.5 8 1" fill="none" stroke="#111" strokeWidth={1.600} strokeLinecap="round" /></svg></TB>
        <TB><svg width={24} height={18} viewBox="0 0 24 18"><path d="M5 0h14v6H5z" fill="#e4e4e4" /><rect x={1} y={5} width={22} height={10} rx={2} fill="#bfc1c3" /><path d="M4 14h16v3H4z" fill="#9a9c9e" /></svg></TB>
        <TB><svg width={22} height={26} viewBox="0 0 22 26"><path d="M1 0h15l5 5v21H1z" fill="#e8f0e4" stroke="#7aa87a" /><rect x={3} y={8} width={17} height={14} fill="#cfe3c8" /><rect x={1} y={9} width={11} height={11} fill="#1f7a3d" /><text x={6.500} y={18} textAnchor="middle" fontSize={10} fontWeight={700} fill="#fff">X</text><path d="M13 11h6M13 15h6M13 19h6" stroke="#1f7a3d" strokeWidth={2} /></svg></TB>
        <TB><svg width={22} height={26} viewBox="0 0 22 26"><path d="M2 0h15l4 5v21H2z" fill="#e6ecf6" stroke="#8aa0c8" /><rect x={1} y={6} width={14} height={12} fill="#2a5fb0" /><text x={8} y={16} textAnchor="middle" fontSize={10} fontWeight={700} fill="#fff">W</text><path d="M16 9h3M16 13h3M5 21h14" stroke="#2a5fb0" /></svg></TB>
        <TB><svg width={22} height={22} viewBox="0 0 22 22"><path d="M1 3h8l2 2h10v16H1z" fill="#f7c84a" /><path d="M1 8h20v13H1z" fill="#ffd968" /><rect x={7} y={14} width={9} height={7} fill="#2a8ed8" /></svg></TB>
        <TB><svg width={18} height={28} viewBox="0 0 18 28"><rect x={1} y={0} width={16} height={28} rx={1} fill="#8a9299" /><rect x={3} y={2} width={12} height={5} fill="#55c0ee" /><path d="M3 10h3v3H3zM7.500 10h3v3h-3zM12 10h3v3h-3zM3 15h3v3H3zM7.500 15h3v3h-3zM12 15h3v3h-3zM3 20h3v3H3zM7.500 20h3v3h-3zM12 20h3v3h-3z" fill="#dfe4e7" /></svg></TB>
        <TB><svg width={24} height={26} viewBox="0 0 24 26"><ellipse cx={10} cy={15} rx={9} ry={9} fill="#c9d2d8" /><circle cx={6} cy={12} r={1.800} fill="#e2422a" /><circle cx={6} cy={18} r={1.800} fill="#2a8ed8" /><circle cx={11} cy={20} r={1.800} fill="#3fb83f" /><path d="M22 0 13 13l2 2L23 2z" fill="#d89a4a" /></svg></TB>
        <TB><svg width={22} height={26} viewBox="0 0 22 26"><path d="M11 0 21 13 11 26 1 13z" fill="#164f9a" /><path d="M11 5 16 13 11 21 6 13z" fill="#101214" /><path d="M8 13 14 7v6l-3 4z" fill="#1f6fd0" /></svg></TB>
        <TB line><svg width={26} height={26} viewBox="0 0 26 26"><circle cx={13} cy={13} r={12} fill="#34a853" /><path d="M13 1a12 12 0 0 1 10.400 6H13a6 6 0 0 0-5.200 3L2.600 7A12 12 0 0 1 13 1z" fill="#ea4335" /><path d="M23.400 7A12 12 0 0 1 13 25l5.200-9A6 6 0 0 0 18 9z" fill="#fbbc05" /><circle cx={13} cy={13} r={5.500} fill="#fff" /><circle cx={13} cy={13} r={4.300} fill="#4285f4" /></svg></TB>
        <TB active line><svg width={22} height={28} viewBox="0 0 22 28"><path d="M15.500 0v28" stroke="#3fd03f" /><rect x={11} y={6} width={9} height={15} fill="#4ce04c" /><path d="M5 9v16" stroke="#e86a6a" /><rect x={1} y={11} width={7} height={11} fill="#f07878" /></svg></TB>
      </div>
      <div className="ml-auto flex w-[59px] flex-col items-center justify-center gap-[4px] pr-[2px] text-[11px] leading-[13px] text-[#d8d8d8]">
        <span>17:07</span>
        <span>08/02/2024</span>
      </div>
    </div>
  );
}

export default function App() {
  return (
    <div className="flex h-[1014px] w-[1800px] flex-col overflow-hidden bg-white font-['Liberation_Sans',Arial,sans-serif]">
      <TopBar />
      <Toolbar />
      <TitleBar />
      <InfoRow />
      <ChartArea />
      <BottomBar />
      <Taskbar />
    </div>
  );
}
